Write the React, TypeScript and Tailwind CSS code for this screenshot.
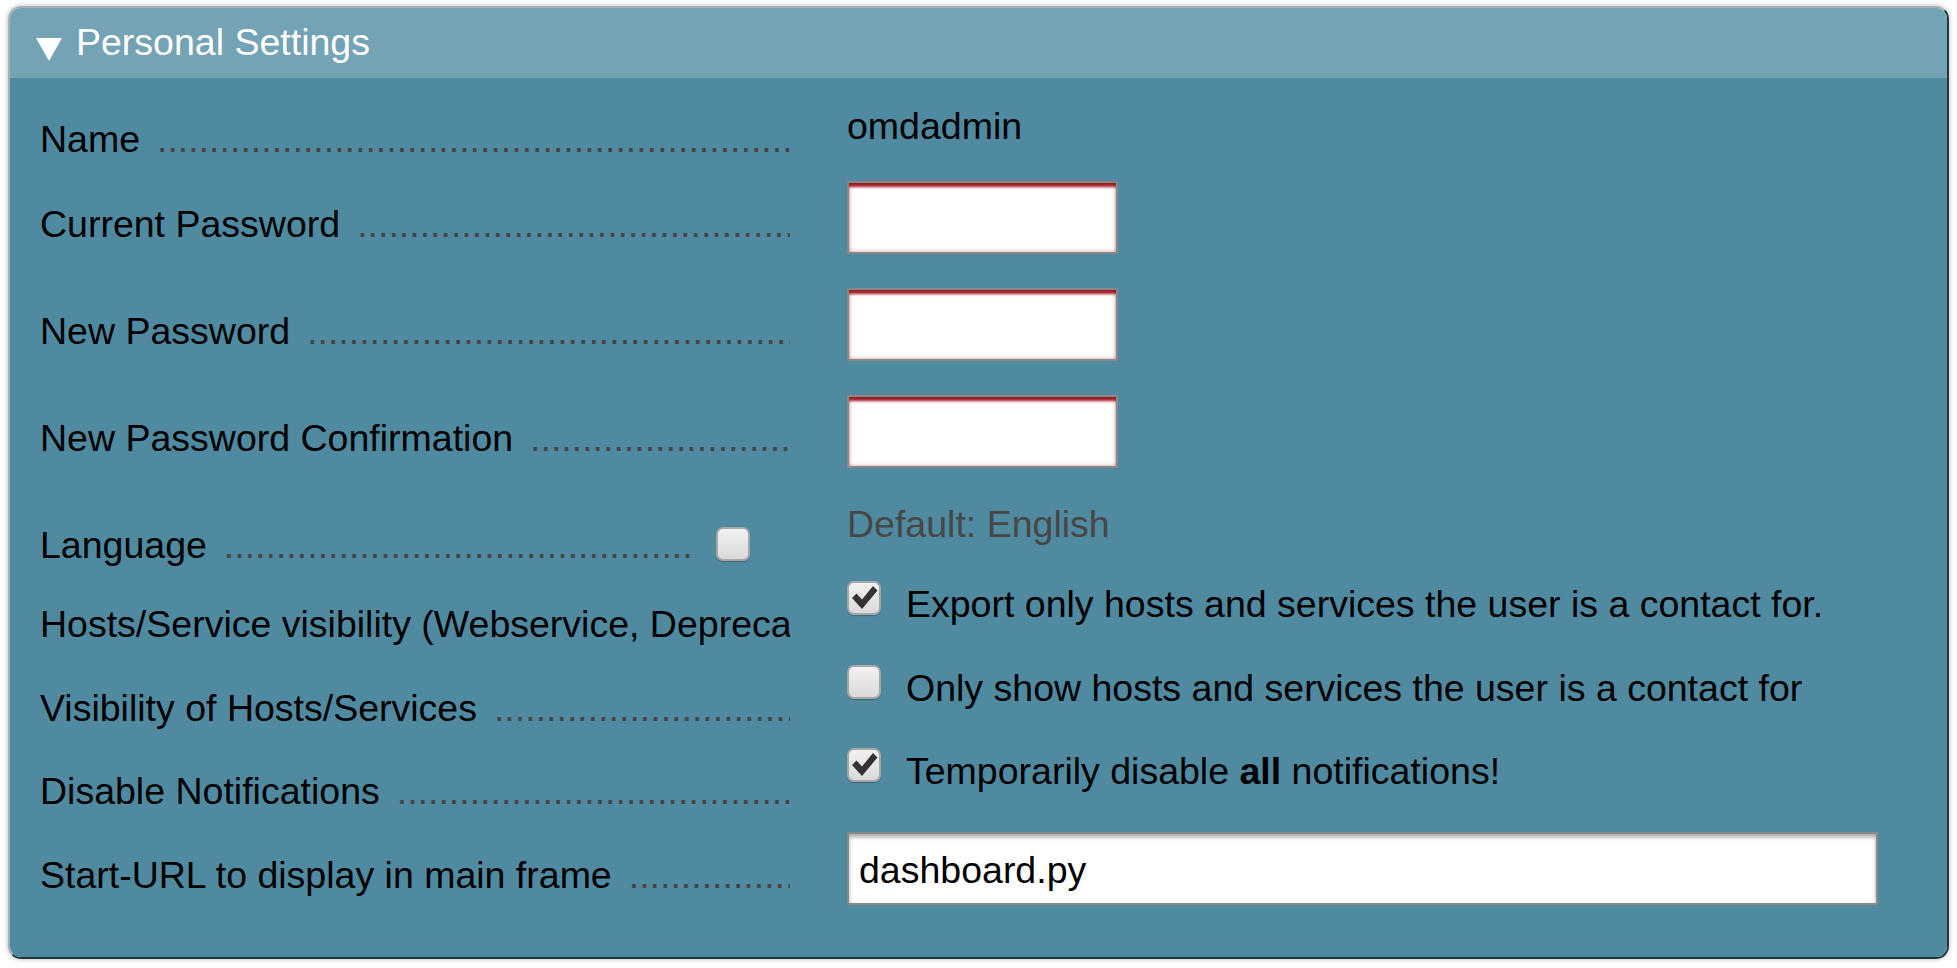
import React from "react";

const DOTS = ".".repeat(120);

function Check({ checked }: { checked: boolean }) {
  return (
    <span className="relative block h-[34px] w-[34px] shrink-0 rounded-[7px] border-2 border-[#a7a7a7] bg-gradient-to-b from-[#f1f1f1] to-[#dadada] shadow-[0_1px_1px_rgba(0,0,0,0.25)]">
      {checked && (
        <svg viewBox="0 0 34 34" className="absolute left-[-2px] top-[-2px] h-[34px] w-[34px]">
          <path d="M5 17 L9.5 12.5 L15 18.5 L26 5 L30.5 9.5 L15 28 Z" fill="#333" />
        </svg>
      )}
    </span>
  );
}

function Label({ text, tail, pt = "pt-[26px]" }: { text: string; tail?: React.ReactNode; pt?: string }) {
  return (
    <div className={`flex w-[750px] shrink-0 items-start overflow-hidden ${pt}`}>
      <span className="shrink-0 whitespace-nowrap">{text}</span>
      <span className="ml-[17px] min-w-0 flex-1 overflow-hidden whitespace-nowrap text-[#454545]">{DOTS}</span>
      {tail}
    </div>
  );
}

function PasswordInput() {
  return (
    <div className="mt-[4px] h-[73px] w-[271px] border-2 border-[#888] bg-white shadow-[inset_0_5px_3px_-1px_#9e1b24,inset_0_0_4px_rgba(170,40,50,0.5)]" />
  );
}

export default function App() {
  return (
    <div className="min-h-screen bg-white px-[8px] pt-[6px] font-['Liberation_Sans',Arial,sans-serif] text-[37.5px] leading-[42px] text-black">
      <div className="overflow-hidden rounded-[13px] border-2 border-t-[#a9b0b3] border-l-[#a9b0b3] border-r-[#1f3845] border-b-[#1f3845] shadow-[0_0_5px_rgba(0,0,0,0.3)]">
        <div className="flex h-[70px] items-start bg-[#73a3b5] pl-[26px] pt-[13px] text-white">
          <svg viewBox="0 0 26 23" className="mt-[17px] h-[23px] w-[26px] shrink-0">
            <path d="M0 0 H26 L13 23 Z" fill="#fff" />
          </svg>
          <span className="ml-[14px]">Personal Settings</span>
        </div>

        <div className="bg-[#4f8aa0] pb-[52px] pl-[30px] pt-[22px]">
          <div className="flex h-[77px]">
            <Label text="Name" pt="pt-[18px]" />
            <div className="ml-[57px] pt-[5px]">omdadmin</div>
          </div>

          <div className="flex h-[107px]">
            <Label text="Current Password" />
            <div className="ml-[57px]">
              <PasswordInput />
            </div>
          </div>

          <div className="flex h-[107px]">
            <Label text="New Password" />
            <div className="ml-[57px]">
              <PasswordInput />
            </div>
          </div>

          <div className="flex h-[107px]">
            <Label text="New Password Confirmation" />
            <div className="ml-[57px]">
              <PasswordInput />
            </div>
          </div>

          <div className="flex h-[79px]">
            <Label
              text="Language"
              tail={
                <span className="ml-[20px] mr-[40px] mt-[3px]">
                  <Check checked={false} />
                </span>
              }
            />
            <div className="ml-[57px] pt-[5px] text-[#474747]">Default: English</div>
          </div>

          <div className="flex h-[84px]">
            <Label text="Hosts/Service visibility (Webservice, Deprecated)" />
            <div className="ml-[57px] flex items-start pt-[4px]">
              <Check checked />
              <span className="ml-[25px] mt-[2px] whitespace-nowrap">Export only hosts and services the user is a contact for.</span>
            </div>
          </div>

          <div className="flex h-[83px]">
            <Label text="Visibility of Hosts/Services" />
            <div className="ml-[57px] flex items-start pt-[4px]">
              <Check checked={false} />
              <span className="ml-[25px] mt-[2px] whitespace-nowrap">Only show hosts and services the user is a contact for</span>
            </div>
          </div>

          <div className="flex h-[84px]">
            <Label text="Disable Notifications" />
            <div className="ml-[57px] flex items-start pt-[4px]">
              <Check checked />
              <span className="ml-[25px] mt-[2px] whitespace-nowrap">
                Temporarily disable <b>all</b> notifications!
              </span>
            </div>
          </div>

          <div className="flex h-[77px]">
            <Label text="Start-URL to display in main frame" />
            <div className="ml-[57px]">
              <div className="mt-[4px] flex h-[73px] w-[1031px] items-center border-2 border-[#888] bg-white pl-[10px] pt-[3px] shadow-[inset_0_3px_4px_rgba(0,0,0,0.35)]">
                dashboard.py
              </div>
            </div>
          </div>
        </div>
      </div>
    </div>
  );
}
